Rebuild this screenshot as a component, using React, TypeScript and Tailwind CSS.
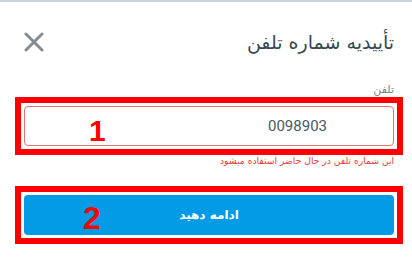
import React from 'react';

const PhoneConfirm = () => {
  return (
    <div
      dir="rtl"
      className="relative w-[412px] h-[260px] overflow-hidden bg-white border-t-[2px] border-[#cdd3d8] font-['DejaVu_Sans',sans-serif]"
    >
      <div className="pl-6 pr-[18px]">
        <div className="flex h-[80px] items-center justify-between">
          <h1 className="text-[19px] font-normal text-[#37474f]">تأییدیه شماره تلفن</h1>
          <button className="flex h-[20px] w-[20px] items-center justify-center text-[#838c93]">
            <svg viewBox="0 0 20 20" width="20" height="20">
              <path d="M2 2 L18 18 M18 2 L2 18" stroke="currentColor" strokeWidth="3" strokeLinecap="round" />
            </svg>
          </button>
        </div>

        <label className="block text-[11px] leading-[15px] text-[#78858d]">تلفن</label>
        <div className="relative -mx-[9px] border-[6px] border-[#f00] p-[3px]">
          <div className="flex h-[40px] items-center rounded-[4px] border border-[#e57373] pr-[66px]">
            <span dir="ltr" className="text-[15px] text-[#4b5961] font-['Roboto',sans-serif]">0098903</span>
          </div>
          <span className="absolute left-[68px] top-[13px] text-[30px] font-bold leading-none text-[#f00] font-['Liberation_Sans',sans-serif]">
            1
          </span>
        </div>
        <p className="text-[9.2px] leading-[12px] text-[#e53935]">این شماره تلفن در حال حاضر استفاده میشود</p>

        <div className="relative -mx-[9px] mt-[19px] border-[6px] border-[#f00] p-[3px]">
          <button className="flex h-[40px] w-full items-center justify-center rounded-[4px] bg-[#039be5] text-[12px] font-bold text-white">
            ادامه دهید
          </button>
          <span className="absolute left-[62px] top-[10px] text-[32px] font-bold leading-none text-[#f00] font-['Liberation_Sans',sans-serif]">
            2
          </span>
        </div>
      </div>
    </div>
  );
};

export default function App() {
  return <PhoneConfirm />;
}
